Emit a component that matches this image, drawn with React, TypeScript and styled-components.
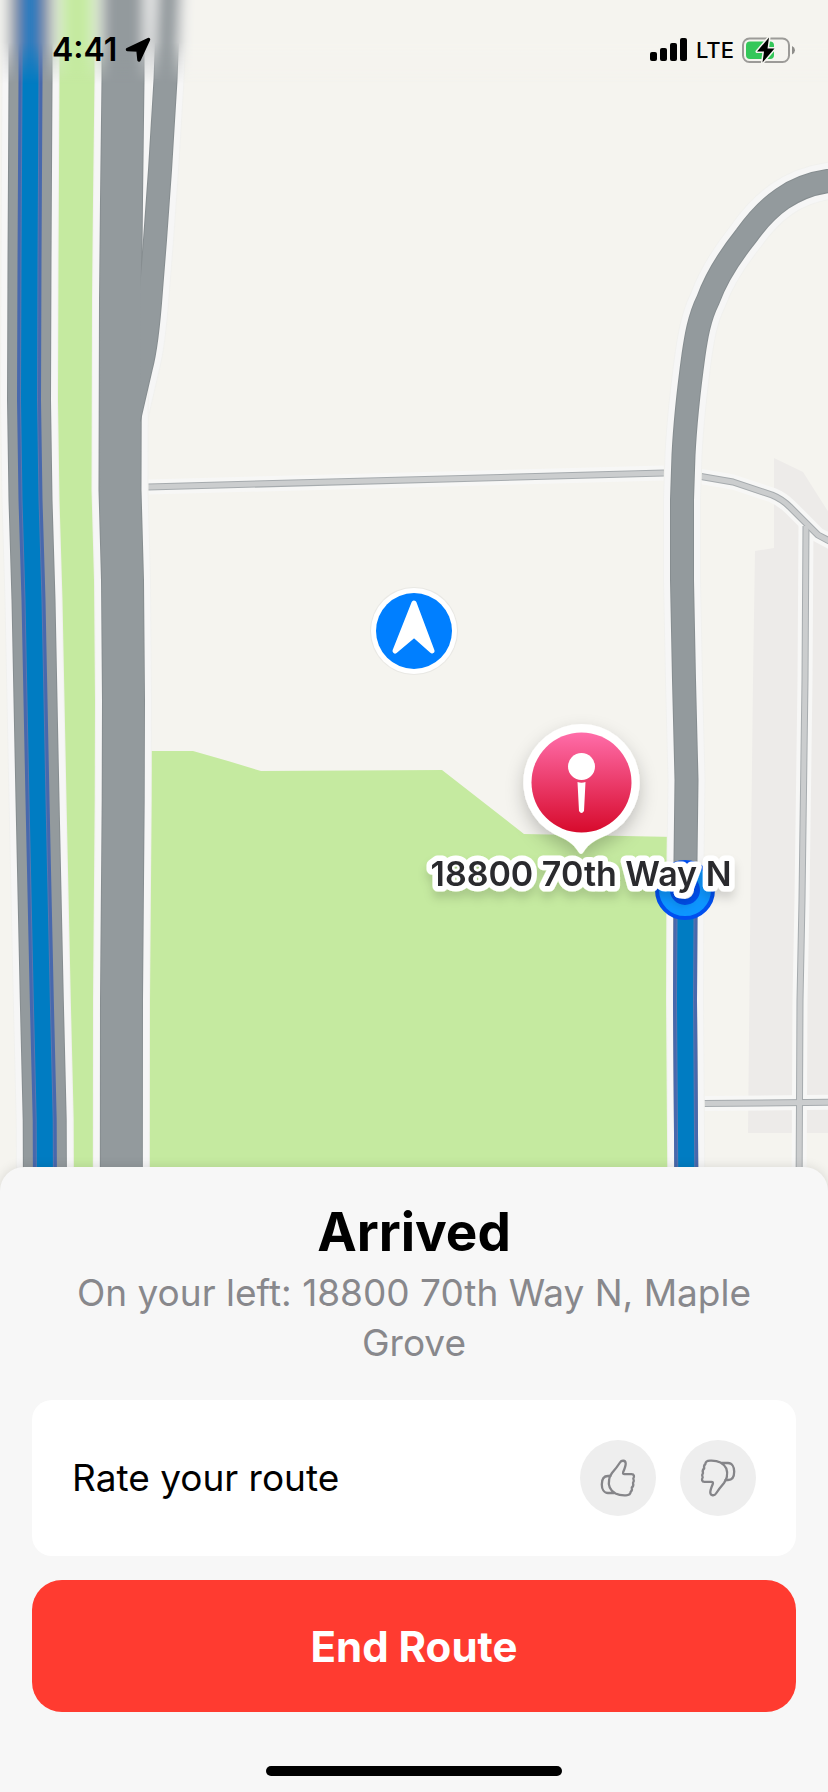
import React from "react";
import styled, { createGlobalStyle } from "styled-components";

const GlobalStyle = createGlobalStyle`
  * { box-sizing: border-box; }
  body {
    margin: 0;
    background: #f7f7f7;
    color: #000;
    font-family: Inter, "Liberation Sans", sans-serif;
  }
`;

const Screen = styled.main`
  display: flex;
  flex-direction: column;
  min-height: 100vh;
`;

const MapArea = styled.section`
  position: relative;
  flex: 1;
  min-height: 480px;
  background: #f5f4ef;
  overflow: hidden;
`;

const MapCanvas = styled.svg`
  position: absolute;
  inset: 0;
  width: 100%;
  height: 100%;
`;

const PlaceLabel = styled.text`
  font-size: 34px;
  font-weight: 600;
  fill: #2b2b2d;
  stroke: #fff;
  stroke-width: 11px;
  stroke-linejoin: round;
  paint-order: stroke;
`;

const StatusBar = styled.header`
  position: relative;
  display: flex;
  align-items: center;
  justify-content: space-between;
  padding: 30px 32px 0 52px;
  height: 70px;
`;

const StatusGroup = styled.div`
  display: flex;
  align-items: center;
  gap: 8px;
`;

const Clock = styled.time`
  font-size: 32px;
  line-height: 40px;
  font-weight: 600;
`;

const Carrier = styled.span`
  font-size: 22px;
  line-height: 40px;
  font-weight: 500;
`;

const Panel = styled.section`
  position: relative;
  display: flex;
  flex-direction: column;
  margin-top: -24px;
  padding: 33px 32px 16px;
  background: #f7f7f7;
  border-radius: 24px 24px 0 0;
  box-shadow: 0 0 12px rgba(0, 0, 0, 0.12);
`;

const Title = styled.h1`
  margin: 0;
  font-size: 53px;
  line-height: 64px;
  font-weight: 700;
  text-align: center;
`;

const Subtitle = styled.p`
  margin: 4px 0 32px;
  padding: 0 24px;
  font-size: 37px;
  line-height: 50px;
  color: #88888c;
  text-align: center;
`;

const RateCard = styled.div`
  display: flex;
  align-items: center;
  gap: 24px;
  padding: 40px;
  background: #fff;
  border-radius: 20px;
`;

const RateLabel = styled.span`
  flex: 1;
  font-size: 37px;
  line-height: 50px;
`;

const ThumbButton = styled.button`
  width: 76px;
  height: 76px;
  padding: 0;
  border: 0;
  border-radius: 50%;
  background: #eee;
  color: #858589;
  cursor: pointer;
`;

const ThumbIcon = styled.svg<{ $down?: boolean }>`
  display: block;
  transform: ${(p) => (p.$down ? "rotate(180deg)" : "none")};
`;

const EndButton = styled.button`
  height: 132px;
  margin-top: 24px;
  border: 0;
  border-radius: 30px;
  background: #ff3b30;
  color: #fff;
  font-family: inherit;
  font-size: 42px;
  font-weight: 700;
  cursor: pointer;
`;

const HomeIndicator = styled.div`
  align-self: center;
  width: 296px;
  height: 10px;
  margin-top: 54px;
  border-radius: 5px;
  background: #000;
`;

const WEST_ROAD = "M30.5 -80 L30.5 80 L29.5 260 L29 400 L30.5 500 L33.5 600 L37.5 800 L41.8 1000 L44.7 1120 L45 1200";
const MAIN_ROAD = "M123 -80 L123 80 L121.5 200 L120.5 300 L120 490 L122.5 580 L123.5 700 L123.2 800 L121.5 1000 L121.3 1200";
const RAMP = "M170 -80 L168.5 0 L165.5 80 L160 170 L155 240 L151 290 Q147 345 141 367 L129 419";
const LOOP_ROAD = "M850 178 L828 181 C793 186 768 205 746 236 C730 256 716 278 708 300 C699 318 696 338 693.5 355 C688 395 685 425 683.5 455 L682 500 L682 580 L684 680 L686.5 780 L685.5 860 L685 1000 L686.5 1200";
const LOOP_ROUTE = "M686 892 L685.5 920 L685 1000 L686.5 1200";
const LANES = [
  "M148 487 L664 473",
  "M701 476.5 L733 482 L772 495 Q782 499 790 507 L818 535 L850 552",
  "M806 526 L805 680 L802 900 L800 1000 L799 1200",
  "M704 1103.5 L850 1102",
];

type RoadProps = { d: string; width: number };

const RoadCasing = ({ d, width }: RoadProps) => (
  <>
    <path d={d} stroke="#f1f1ee" strokeWidth={width + 14} />
    <path d={d} stroke="#f6f6f6" strokeWidth={width + 12} />
  </>
);

const RoadSurface = ({ d, width }: RoadProps) => (
  <>
    <path d={d} stroke="#868d90" strokeWidth={width} />
    <path d={d} stroke="#939a9d" strokeWidth={width - 2} />
  </>
);

const RouteLine = ({ d }: { d: string }) => (
  <>
    <path d={d} stroke="#4768ad" strokeWidth={24} />
    <path d={d} stroke="#5b77ae" strokeWidth={18} />
    <path d={d} stroke="#007cc2" strokeWidth={16} />
  </>
);

const Terrain = () => (
  <g id="terrain" fill="none" strokeLinejoin="round">
    <rect x="-80" y="-80" width="988" height="1300" fill="#f5f4ef" />
    <path d="M774 458 L803 472 L850 546 L850 1133 L748 1133 L750 940 L753 680 L755 551 L774 548 Z" fill="#edebe9" />
    <path d="M151 751 H193 L228 761 L261 771 L442 770 L524 834 L675 837 V1200 H140 L150 900 Z" fill="#c5eaa0" />
    <path d="M55 -80 H100 V1200 H68 L60 800 L52 480 Z" fill="#c5eaa0" />
    {LANES.map((d) => <path key={d} d={d} stroke="#f7f7f6" strokeWidth={15} />)}
    {LANES.map((d) => <path key={d} d={d} stroke="#a6abae" strokeWidth={7} />)}
    {LANES.map((d) => <path key={d} d={d} stroke="#cbcdce" strokeWidth={5} />)}
    <RoadCasing d={WEST_ROAD} width={44} />
    <RoadCasing d={RAMP} width={24} />
    <RoadCasing d={MAIN_ROAD} width={43} />
    <RoadCasing d={LOOP_ROAD} width={24} />
    <RoadSurface d={WEST_ROAD} width={44} />
    <RoadSurface d={MAIN_ROAD} width={43} />
    <RoadSurface d={RAMP} width={24} />
    <path d={MAIN_ROAD} stroke="#939a9d" strokeWidth={40} />
    <RoadSurface d={LOOP_ROAD} width={24} />
    <RouteLine d={WEST_ROAD} />
    <RouteLine d={LOOP_ROUTE} />
  </g>
);

const RouteMap = () => (
  <MapCanvas viewBox="0 0 828 1191" preserveAspectRatio="xMidYMin slice" role="img" aria-label="Route map">
    <defs>
      <linearGradient id="pinFill" x1="0" y1="0" x2="0" y2="1">
        <stop offset="0" stopColor="#ff6da9" />
        <stop offset="1" stopColor="#d70a2c" />
      </linearGradient>
      <linearGradient id="topFade" x1="0" y1="0" x2="0" y2="1">
        <stop offset="0.5" stopColor="#fff" />
        <stop offset="1" stopColor="#000" />
      </linearGradient>
      <mask id="topMask" maskUnits="userSpaceOnUse" x="0" y="0" width="828" height="84">
        <rect width="828" height="84" fill="url(#topFade)" />
      </mask>
      <filter id="soften" filterUnits="userSpaceOnUse" x="-80" y="-80" width="988" height="220">
        <feGaussianBlur stdDeviation="7 3" />
      </filter>
      <filter id="pinShadow" x="-50%" y="-50%" width="200%" height="200%">
        <feDropShadow dx="0" dy="8" stdDeviation="9" floodOpacity="0.22" />
      </filter>
      <filter id="labelShadow" x="-20%" y="-60%" width="140%" height="240%">
        <feDropShadow dx="0" dy="7" stdDeviation="5" floodOpacity="0.14" />
      </filter>
    </defs>
    <Terrain />
    <g mask="url(#topMask)">
      <use href="#terrain" filter="url(#soften)" />
    </g>

    <circle cx="414" cy="631" r="44" fill="#e9e8e4" />
    <circle cx="414" cy="631" r="43" fill="#fff" />
    <circle cx="414" cy="631" r="38" fill="#007fff" />
    <path d="M414 603 L432 651 L414 635 L395 651 Z" fill="#fff" stroke="#fff" strokeWidth="5" strokeLinejoin="round" />

    <circle cx="685" cy="890" r="28" fill="#0d96ff" stroke="#004fef" strokeWidth="4" />
    <circle cx="685" cy="890" r="12" fill="#fff" stroke="#004fef" strokeWidth="6" />

    <path
      filter="url(#pinShadow)"
      d="M581.5 724 A58.5 58.5 0 0 1 608 834.5 C596 840 589 843 583.5 852 Q581 856 578.5 852 C573 843 567 840 555 834.5 A58.5 58.5 0 0 1 581.5 724 Z"
      fill="#fff"
    />
    <circle cx="581.5" cy="782.5" r="50" fill="url(#pinFill)" />
    <circle cx="581.5" cy="766.5" r="13.5" fill="#fff" />
    <path d="M577.5 782 Q581.5 783.5 585.5 782 L584 811 Q581.5 815 579 811 Z" fill="#fff" />
    <g filter="url(#labelShadow)">
      <PlaceLabel x="581" y="886" textAnchor="middle">18800 70th Way N</PlaceLabel>
    </g>
  </MapCanvas>
);

const LocationArrow = () => (
  <svg width="26" height="26" viewBox="0 0 26 26" aria-hidden="true">
    <path d="M23.5 2.5 L14 23 L13 13 L2.5 12.5 Z" fill="#000" stroke="#000" strokeWidth="3.5" strokeLinejoin="round" />
  </svg>
);

const SignalBars = () => (
  <svg width="38" height="24" viewBox="0 0 38 24" aria-hidden="true">
    <rect x="0" y="14" width="7" height="9" rx="2" />
    <rect x="10" y="10" width="7" height="13" rx="2" />
    <rect x="20" y="5" width="7" height="18" rx="2" />
    <rect x="30" y="0" width="7" height="23" rx="2" />
  </svg>
);

const Battery = () => (
  <svg width="54" height="28" viewBox="0 0 54 28" aria-hidden="true">
    <rect x="1" y="2.5" width="46" height="23.5" rx="6.5" fill="none" stroke="#9c9b98" strokeWidth="2" />
    <path d="M50 10 Q53 11.5 53 14.3 Q53 17 50 18.5 Z" fill="#8e8d8a" />
    <rect x="4" y="5.5" width="28" height="17.5" rx="4" fill="#34c759" />
    <path d="M27 1.5 L15 15.5 H22 L20.5 26.5 L32.5 12.5 H25.5 Z" fill="#000" stroke="#f5f4ef" strokeWidth="3" strokeLinejoin="round" paintOrder="stroke" />
  </svg>
);

const Thumb = ({ down }: { down?: boolean }) => (
  <ThumbIcon
    $down={down}
    width="76"
    height="76"
    viewBox="0 0 76 76"
    fill="none"
    stroke="currentColor"
    strokeWidth="2.3"
    strokeLinecap="round"
    strokeLinejoin="round"
    aria-hidden="true"
  >
    <path d="M40 22.5 C41.5 20 45.5 20 45.7 23.5 C45.8 26 44.5 29 43.2 32 Q42.5 34.2 44.5 34.2 H51.5 C54.3 34.3 54.5 36.5 53.3 38.5 Q54.5 41 53 43 Q54 46 51.8 47.5 Q52.5 50.5 50.6 52 C50.5 54.5 49 55.2 46 55.3 C42 55.5 38.5 55 35.5 53.5 C30 50.5 28 45 29.2 39 C29.6 36.5 30.5 35 32 33 C35 29.5 37.5 26.5 40 22.5 Z" />
    <path d="M30.5 36 H28 C23.5 36 21.8 40 21.8 44.5 C21.8 49 24 53 28 53 H34" />
  </ThumbIcon>
);

export default function App() {
  return (
    <>
      <GlobalStyle />
      <Screen>
        <MapArea>
          <RouteMap />
          <StatusBar>
            <StatusGroup>
              <Clock>4:41</Clock>
              <LocationArrow />
            </StatusGroup>
            <StatusGroup>
              <SignalBars />
              <Carrier>LTE</Carrier>
              <Battery />
            </StatusGroup>
          </StatusBar>
        </MapArea>
        <Panel>
          <Title>Arrived</Title>
          <Subtitle>On your left: 18800 70th Way N, Maple Grove</Subtitle>
          <RateCard>
            <RateLabel>Rate your route</RateLabel>
            <ThumbButton type="button" aria-label="Thumbs up">
              <Thumb />
            </ThumbButton>
            <ThumbButton type="button" aria-label="Thumbs down">
              <Thumb down />
            </ThumbButton>
          </RateCard>
          <EndButton type="button">End Route</EndButton>
          <HomeIndicator />
        </Panel>
      </Screen>
    </>
  );
}
